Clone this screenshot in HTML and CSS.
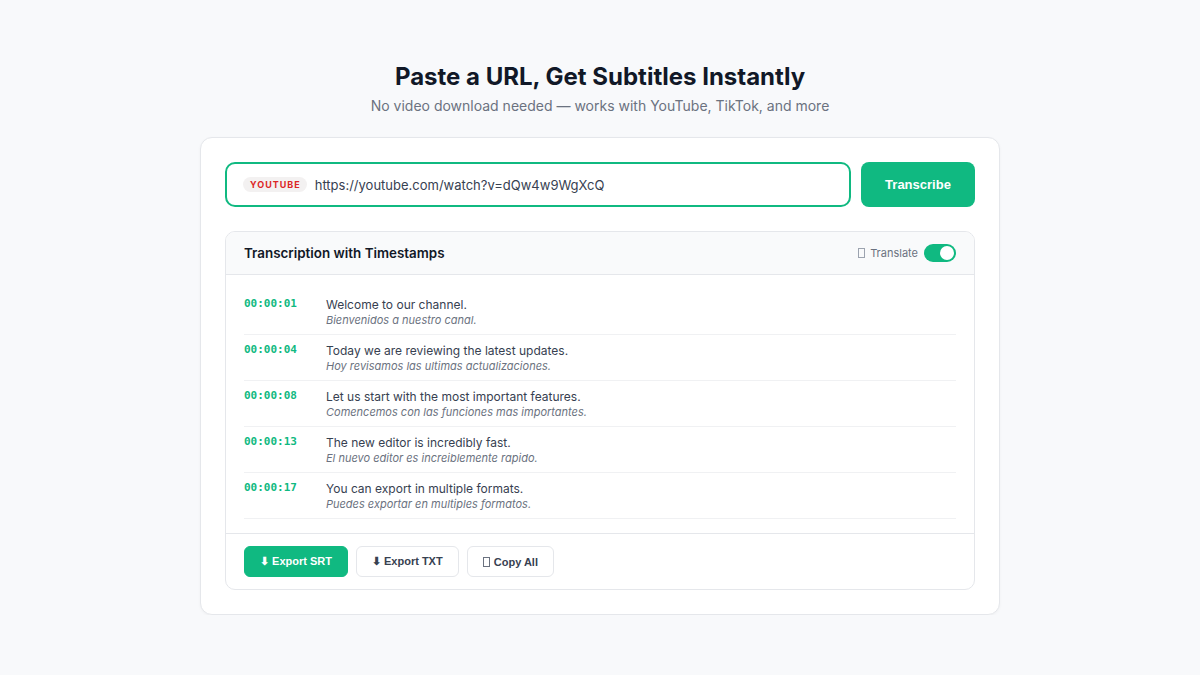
FILE: index.html
```html
<!DOCTYPE html>
<html lang="en">
<head>
    <meta charset="UTF-8">
    <title>Subtitles</title>
    <link rel="stylesheet" href="styles.css">
</head>
<body>
<div class="page">
    <h1 class="title">Paste a URL, Get Subtitles Instantly</h1>
    <p class="subtitle">No video download needed — works with YouTube, TikTok, and more</p>

    <div class="card">
        <div class="url-row">
            <div class="url-box">
                <span class="badge">YOUTUBE</span>
                <span class="url-text">https://youtube.com/watch?v=dQw4w9WgXcQ</span>
            </div>
            <button class="btn-main">Transcribe</button>
        </div>

        <div class="panel">
            <div class="panel-head">
                <span class="panel-title">Transcription with Timestamps</span>
                <div class="translate">
                    <span class="tofu"></span>
                    <span>Translate</span>
                    <span class="toggle"><span class="knob"></span></span>
                </div>
            </div>
            <div class="list">
                <div class="row">
                    <div class="time">00:00:01</div>
                    <div class="lines">
                        <div class="line">Welcome to our channel.</div>
                        <div class="trans">Bienvenidos a nuestro canal.</div>
                    </div>
                </div>
                <div class="row">
                    <div class="time">00:00:04</div>
                    <div class="lines">
                        <div class="line">Today we are reviewing the latest updates.</div>
                        <div class="trans">Hoy revisamos las ultimas actualizaciones.</div>
                    </div>
                </div>
                <div class="row">
                    <div class="time">00:00:08</div>
                    <div class="lines">
                        <div class="line">Let us start with the most important features.</div>
                        <div class="trans">Comencemos con las funciones mas importantes.</div>
                    </div>
                </div>
                <div class="row">
                    <div class="time">00:00:13</div>
                    <div class="lines">
                        <div class="line">The new editor is incredibly fast.</div>
                        <div class="trans">El nuevo editor es increiblemente rapido.</div>
                    </div>
                </div>
                <div class="row">
                    <div class="time">00:00:17</div>
                    <div class="lines">
                        <div class="line">You can export in multiple formats.</div>
                        <div class="trans">Puedes exportar en multiples formatos.</div>
                    </div>
                </div>
            </div>
            <div class="panel-foot">
                <button class="btn-small green">⬇ Export SRT</button>
                <button class="btn-small">⬇ Export TXT</button>
                <button class="btn-small"><span class="tofu dark"></span> Copy All</button>
            </div>
        </div>
    </div>
</div>
</body>
</html>
```

FILE: styles.css
```css
body {
    margin: 0;
    background: #f8f9fb;
    font-family: 'Inter', 'Liberation Sans', sans-serif;
    color: #111827;
}

.page {
    display: flex;
    flex-direction: column;
    align-items: center;
    padding-top: 62px;
}

.title {
    margin: 0;
    font-size: 24px;
    line-height: 30px;
    font-weight: 700;
    color: #111827;
}

.subtitle {
    margin: 4px 0 0;
    font-size: 14px;
    line-height: 20px;
    color: #6b7280;
}

.card {
    margin-top: 21px;
    width: 750px;
    padding: 24px;
    background: #fff;
    border: 1px solid #e5e7eb;
    border-radius: 12px;
    box-shadow: 0 1px 3px rgba(0, 0, 0, 0.04);
}

.url-row {
    display: flex;
    gap: 10px;
}

.url-box {
    flex: 1;
    height: 41px;
    display: flex;
    align-items: center;
    gap: 8px;
    padding: 0 16px;
    border: 2px solid #10b981;
    border-radius: 10px;
}

.badge {
    background: #f3f1f1;
    color: #dc2626;
    font-size: 9px;
    font-weight: 700;
    letter-spacing: 1px;
    padding: 2px 6px 2px 7px;
    border-radius: 10px;
    line-height: 11px;
}

.url-text {
    font-size: 13px;
    color: #374151;
}

.btn-main {
    width: 114px;
    height: 45px;
    border: none;
    border-radius: 8px;
    background: #10b981;
    color: #fff;
    font-family: 'Liberation Sans', sans-serif;
    font-weight: 700;
    font-size: 13px;
}

.panel {
    margin-top: 24px;
    border: 1px solid #e5e7eb;
    border-radius: 10px;
    overflow: hidden;
}

.panel-head {
    height: 42px;
    display: flex;
    align-items: center;
    justify-content: space-between;
    padding: 0 18px;
    background: #f9fafb;
    border-bottom: 1px solid #e5e7eb;
}

.panel-title {
    font-size: 13.4px;
    font-weight: 600;
    color: #111827;
}

.translate {
    display: flex;
    align-items: center;
    gap: 4px;
    font-size: 11px;
    color: #6b7280;
}

.tofu {
    display: inline-block;
    width: 5px;
    height: 8px;
    border: 1px solid #9ca3af;
    margin-right: 1px;
}

.tofu.dark {
    border-color: #6b7280;
    vertical-align: -1px;
}

.toggle {
    position: relative;
    width: 32px;
    height: 18px;
    border-radius: 9px;
    background: #10b981;
    margin-left: 2px;
}

.knob {
    position: absolute;
    right: 2px;
    top: 2px;
    width: 14px;
    height: 14px;
    border-radius: 50%;
    background: #fff;
}

.list {
    padding: 14px 18px 14px;
}

.row {
    display: flex;
    padding: 7px 0;
    border-bottom: 1px solid #f0f1f3;
}

.time {
    width: 82px;
    flex-shrink: 0;
    font-family: 'DejaVu Sans Mono', monospace;
    font-weight: 700;
    font-size: 11px;
    line-height: 16px;
    color: #10b981;
}

.line {
    font-size: 12px;
    line-height: 17px;
    color: #374151;
}

.trans {
    font-size: 11px;
    line-height: 14px;
    font-style: italic;
    color: #6b7280;
}

.panel-foot {
    display: flex;
    gap: 8px;
    padding: 12px 18px;
    border-top: 1px solid #e5e7eb;
}

.btn-small {
    height: 31px;
    padding: 0 15px;
    border: 1px solid #e5e7eb;
    border-radius: 6px;
    background: #fff;
    color: #374151;
    font-family: 'Liberation Sans', sans-serif;
    font-weight: 700;
    font-size: 11px;
}

.btn-small.green {
    background: #10b981;
    border-color: #10b981;
    color: #fff;
}
```
